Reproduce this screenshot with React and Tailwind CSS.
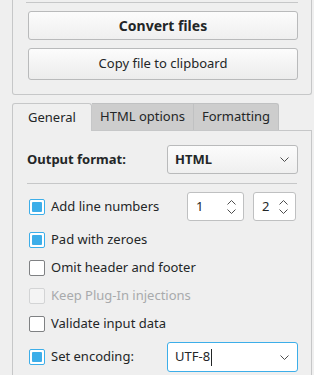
import React from 'react';

const font = { fontFamily: '"Noto Sans", "DejaVu Sans", sans-serif' };

function Chevron({ up = false, className = '' }) {
  return (
    <svg width="9" height="5" viewBox="0 0 9 5" className={className} fill="none" stroke="#4d4d4d" strokeWidth="1">
      {up ? <path d="M0.5 4.5 L4.5 0.5 L8.5 4.5" /> : <path d="M0.5 0.5 L4.5 4.5 L8.5 0.5" />}
    </svg>
  );
}

function CheckBox({ checked = false, disabled = false }) {
  if (checked) {
    return (
      <span className="w-4 h-4 shrink-0 rounded-[2px] border border-[#3daee9] bg-white flex items-center justify-center">
        <span className="w-[10px] h-[10px] bg-[#3daee9] rounded-[1px]" />
      </span>
    );
  }
  return (
    <span
      className={
        disabled
          ? 'w-4 h-4 shrink-0 rounded-[2px] border border-[#d3d4d5] bg-[#f4f4f4]'
          : 'w-4 h-4 shrink-0 rounded-[2px] border border-[#7f8183] bg-white'
      }
    />
  );
}

function CheckRow({ label, checked, disabled }) {
  return (
    <div className="h-[28px] flex items-center gap-[6px] pl-[2px]">
      <CheckBox checked={checked} disabled={disabled} />
      <span className={disabled ? 'text-[#a8aaac]' : 'text-[#232627]'}>{label}</span>
    </div>
  );
}

function SpinBox({ value, width }) {
  return (
    <div className={`${width} h-[29px] bg-white border border-[#bfc0c1] rounded-[3px] flex items-center justify-between pl-[8px] pr-[7px]`}>
      <span>{value}</span>
      <div className="flex flex-col gap-[4px]">
        <Chevron up />
        <Chevron />
      </div>
    </div>
  );
}

export default function App() {
  return (
    <div className="w-[314px] h-[375px] bg-[#efefef] overflow-hidden text-[13px] text-[#232627]" style={font}>
      {/* Grupo superior */}
      <div className="ml-[12px] w-[300px] h-[95px] border-x border-b border-[#c6c7c8] rounded-b-[3px] px-[14px] pt-[2px]">
        <div className="h-px bg-[#c6c7c8] -mx-[1px]" />
        <button className="mt-[8px] ml-[1px] w-[270px] h-[29px] rounded-[3px] border border-[#b9babb] bg-gradient-to-b from-[#fcfcfc] to-[#efefef] font-bold text-[14px]">
          Convert files
        </button>
        <button className="mt-[8px] ml-[1px] w-[270px] h-[32px] rounded-[3px] border border-[#b9babb] bg-gradient-to-b from-[#fcfcfc] to-[#ececec]">
          Copy file to clipboard
        </button>
      </div>

      {/* Pestañas */}
      <div className="mt-[8px] ml-[12px] flex h-[27px]">
        <div className="w-[80px] h-[28px] border-x border-t border-[#c6c7c8] bg-[#efefef] rounded-t-[3px] flex items-center justify-center relative z-10">
          General
        </div>
        <div className="w-[102px] border-t border-r border-[#c0c1c2] bg-[#cdcdcd] flex items-center justify-center">
          HTML options
        </div>
        <div className="w-[85px] border-t border-r border-[#c0c1c2] bg-[#cdcdcd] rounded-tr-[3px] flex items-center justify-center">
          Formatting
        </div>
      </div>

      <div className="ml-[12px] w-[300px] h-[260px] border border-[#c6c7c8] px-[14px] pt-[14px]">
        {/* Formato de salida */}
        <div className="flex items-center justify-between">
          <span className="font-bold">Output format:</span>
          <div className="mr-[-1px] w-[131px] h-[29px] rounded-[3px] border border-[#b9babb] bg-gradient-to-b from-[#fcfcfc] to-[#efefef] flex items-center justify-between pl-[7px] pr-[8px]">
            <span className="font-bold">HTML</span>
            <Chevron />
          </div>
        </div>

        <div className="mt-[9px] h-px bg-[#c6c7c8]" />

        {/* Números de línea */}
        <div className="mt-[8px] h-[29px] flex items-center gap-[6px] pl-[2px]">
          <CheckBox checked />
          <span className="flex-1">Add line numbers</span>
          <div className="flex gap-[9px] mr-[1px]">
            <SpinBox value="1" width="w-[57px]" />
            <SpinBox value="2" width="w-[43px]" />
          </div>
        </div>

        <div className="mt-[5px]">
          <CheckRow label="Pad with zeroes" checked />
          <CheckRow label="Omit header and footer" />
          <CheckRow label="Keep Plug-In injections" disabled />
          <CheckRow label="Validate input data" />
        </div>

        {/* Codificación */}
        <div className="mt-[4px] flex items-center justify-between pl-[2px]">
          <div className="flex items-center gap-[6px]">
            <CheckBox checked />
            <span>Set encoding:</span>
          </div>
          <div className="mr-[-1px] w-[131px] h-[30px] rounded-[3px] border border-[#3daee9] bg-white flex items-center justify-between pl-[7px] pr-[8px]">
            <span className="flex items-center">
              UTF-8
              <span className="ml-[1px] w-px h-[17px] bg-[#232627]" />
            </span>
            <Chevron />
          </div>
        </div>
      </div>
    </div>
  );
}
